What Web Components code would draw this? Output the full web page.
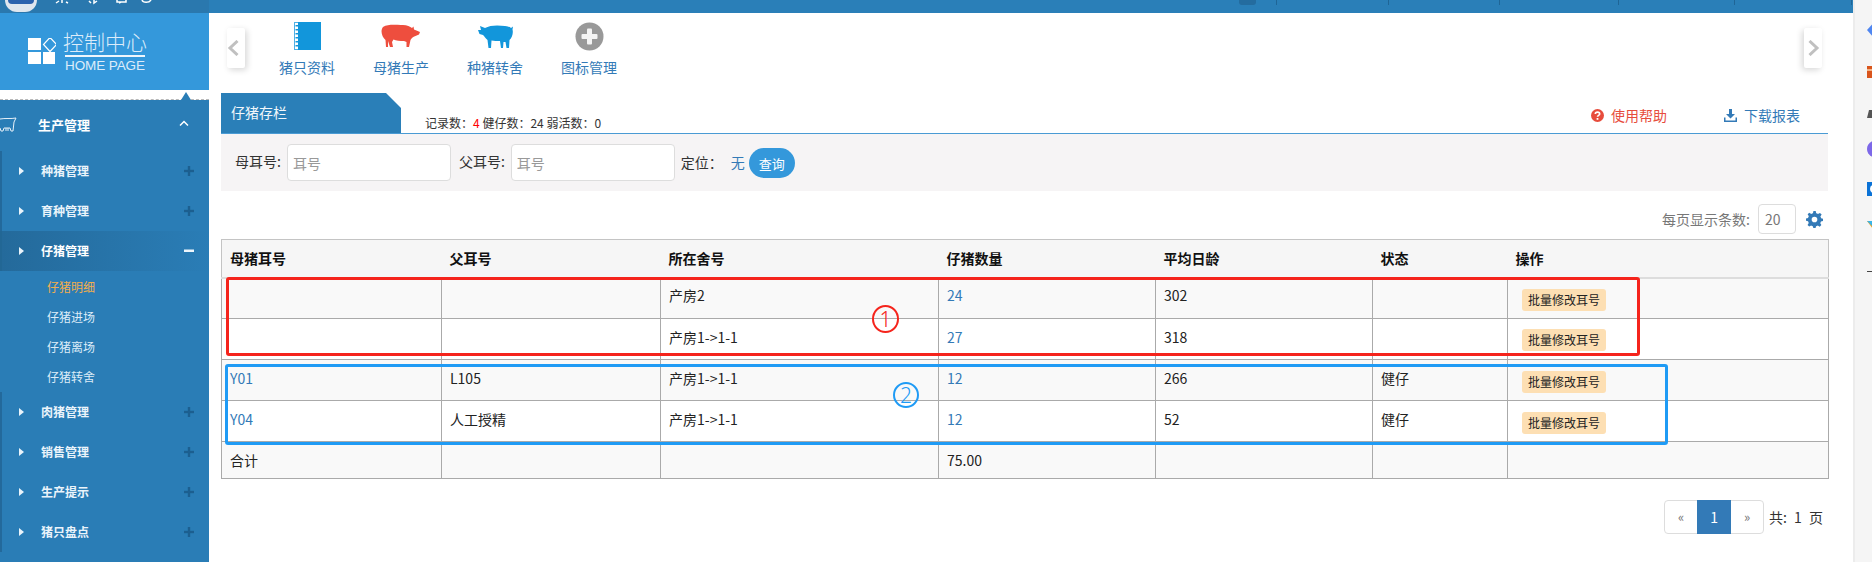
<!DOCTYPE html>
<html lang="zh">
<head>
<meta charset="utf-8">
<title>仔猪存栏</title>
<style>
  html, body { margin: 0; height: 562px; overflow: hidden; background: #fff; }
  body { display: flex; font: 14px/20px "Noto Sans CJK SC", "Liberation Sans", sans-serif; color: #333; }
  .app { flex: 0 0 1853px; min-width: 0; display: flex; flex-direction: column; height: 562px; }
  .body { flex: 1; display: flex; min-height: 0; }
  .left { flex: 0 0 209px; display: flex; flex-direction: column; min-height: 0; }
  .main { flex: 1; display: flex; flex-direction: column; padding: 0 25px 0 12px; min-width: 0; }
</style>
</head>
<body>
  <div class="app">
    <top-bar></top-bar>
    <div class="body">
      <div class="left">
        <logo-panel></logo-panel>
        <side-nav>
          <nav-head>生产管理</nav-head>
          <nav-item>种猪管理</nav-item>
          <nav-item>育种管理</nav-item>
          <nav-item open>仔猪管理</nav-item>
          <nav-sub active first>仔猪明细</nav-sub>
          <nav-sub>仔猪进场</nav-sub>
          <nav-sub>仔猪离场</nav-sub>
          <nav-sub>仔猪转舍</nav-sub>
          <nav-item>肉猪管理</nav-item>
          <nav-item>销售管理</nav-item>
          <nav-item>生产提示</nav-item>
          <nav-item>猪只盘点</nav-item>
        </side-nav>
      </div>
      <div class="main">
        <quick-bar></quick-bar>
        <tab-header></tab-header>
        <filter-bar></filter-bar>
        <page-size></page-size>
        <piglet-table></piglet-table>
        <table-pager></table-pager>
      </div>
    </div>
  </div>
  <side-dock></side-dock>

<script>
const FONT = '"Noto Sans CJK SC", "Liberation Sans", sans-serif';

class TopBar extends HTMLElement {
  constructor() {
    super();
    this.attachShadow({ mode: 'open' });
    const dividers = [21, 112, 111, 119, 116, 117];
    this.shadowRoot.innerHTML = `
      <style>
        :host { display: flex; flex: 0 0 13px; height: 13px; background: #2a7fb8; overflow: hidden; }
        .brand { flex: 0 0 209px; background: #2a78ae; display: flex; align-items: flex-start; padding-left: 5px; box-sizing: border-box; }
        .seal { width: 32px; height: 12px; background: #dfe6ee; border-radius: 0 0 16px 16px; display: flex; justify-content: center; }
        .seal i { width: 26px; height: 4px; background: #2b62ad; border-radius: 0 0 4px 4px; }
        svg { margin-left: 18px; }
        .right { flex: 1; min-width: 0; display: flex; padding-left: 1030px; align-items: flex-start; }
        .chip { flex: none; width: 17px; height: 5px; background: #246c9f; border-radius: 0 0 3px 3px; }
        .cell { flex: none; height: 5px; border-right: 1px solid #1f6596; box-sizing: border-box; }
      </style>
      <div class="brand">
        <div class="seal"><i></i></div>
        <svg width="100" height="13" fill="none" stroke="#fff" stroke-width="1.5">
          <path d="M1 3 L4 1 M7 0 V3 M11 2 L13 3"/>
          <path d="M34 1 L36 3 M39 0 V3 L42 1"/>
          <path d="M62 0 V2 H71 V0 M64 3 L66 2"/>
          <path d="M87 0 C88 3 94 3 96 0"/>
        </svg>
      </div>
      <div class="right">
        <div class="chip"></div>
        ${dividers.map(w => `<div class="cell" style="width:${w}px"></div>`).join('')}
      </div>`;
  }
}
customElements.define('top-bar', TopBar);

class LogoPanel extends HTMLElement {
  constructor() {
    super();
    this.attachShadow({ mode: 'open' });
    this.shadowRoot.innerHTML = `
      <style>
        :host { display: block; flex: 0 0 87px; color: #dcecfa; font-family: ${FONT}; }
        .panel { height: 77px; background: #3498db; display: flex; align-items: flex-start; box-sizing: border-box; padding: 15px 0 0 28px; }
        svg { margin-top: 10px; flex: none; }
        .words { margin-left: 9px; display: flex; flex-direction: column; width: 80px; }
        .cn { font-size: 21px; line-height: 26px; font-weight: 300; white-space: nowrap; margin-left: -2px; }
        .rule { height: 2px; background: #eef6fd; margin-top: 1px; }
        .en { font: 13.5px/16px "Liberation Sans", sans-serif; white-space: nowrap; letter-spacing: -.1px; margin-top: 1px; }
        .gap { height: 10px; border-bottom: 1px dashed #b9b9b9; box-sizing: border-box; display: flex; justify-content: flex-end; align-items: flex-end; padding-right: 18px; }
        .gap i { border: 5px solid transparent; border-bottom: 8px solid #2a7db6; border-top: 0; margin-bottom: -1px; }
      </style>
      <div class="panel">
        <svg width="28" height="27" viewBox="0 0 28 27" fill="#fff">
          <rect x="0" y="0" width="13" height="12"/>
          <rect x="0" y="14" width="13" height="12"/>
          <rect x="15" y="14" width="12" height="12"/>
          <path d="M22 -1 L28.500 6 L22 13 L15.500 6 Z" fill="none" stroke="#fff" stroke-width="1.200" transform="translate(0 0.500)"/>
        </svg>
        <div class="words">
          <div class="cn">控制中心</div>
          <div class="rule"></div>
          <div class="en">HOME PAGE</div>
        </div>
      </div>
      <div class="gap"><i></i></div>`;
  }
}
customElements.define('logo-panel', LogoPanel);

class SideNav extends HTMLElement {
  constructor() {
    super();
    this.attachShadow({ mode: 'open' });
    this.shadowRoot.innerHTML = `
      <style>
        :host { display: flex; flex-direction: column; flex: 1; background: #2a7db6; overflow: hidden; font-family: ${FONT}; }
      </style>
      <slot></slot>`;
  }
}
customElements.define('side-nav', SideNav);

class NavHead extends HTMLElement {
  constructor() {
    super();
    this.attachShadow({ mode: 'open' });
    this.shadowRoot.innerHTML = `
      <style>
        :host { display: flex; align-items: center; flex: 0 0 51px; height: 51px; color: #fff; font-size: 13px; font-weight: 700; box-sizing: border-box; padding-bottom: 1px; }
        svg.pig { flex: none; margin-right: 21px; }
        .label { flex: 1; }
        svg.up { flex: none; margin: -4px 20px 0 0; }
      </style>
      <svg class="pig" width="17" height="16" viewBox="0 0 17 16" fill="none" stroke="#e6f1f9" stroke-width="1">
        <path d="M0 2 C5 1 11 2 16 1 L14 5 L13 14 L11 14 L10 11 H4 L3 14 L1 14 L0 11"/>
        <path d="M6 11 V14 M8 11 V14"/>
      </svg>
      <span class="label"><slot></slot></span>
      <svg class="up" width="10" height="6" viewBox="0 0 10 6" fill="none" stroke="#fff" stroke-width="1.500"><path d="M1 5.500 L5 1.500 L9 5.500"/></svg>`;
  }
}
customElements.define('nav-head', NavHead);

class NavItem extends HTMLElement {
  constructor() {
    super();
    this.attachShadow({ mode: 'open' });
    this.shadowRoot.innerHTML = `
      <style>
        :host { display: flex; align-items: center; flex: 0 0 40px; height: 40px; color: #eaf4fb; font-size: 12px; font-weight: 700; box-sizing: border-box; border-left: 2px solid #23699b; border-bottom: 0 solid transparent; padding-left: 17px; }
        :host([open]) { border-left-color: #226795; background: linear-gradient(90deg, #246a9b, #2a7db6); color: #fff; }
        .tri { flex: none; border-left: 5px solid #eaf4fb; border-top: 4px solid transparent; border-bottom: 4px solid transparent; margin-right: 17px; }
        .label { flex: 1; }
        svg { flex: none; margin-right: 15px; }
      </style>
      <i class="tri"></i>
      <span class="label"><slot></slot></span>
      <svg width="10" height="10" viewBox="0 0 10 10" fill="${this.hasAttribute('open') ? '#eef6fc' : '#1c5f90'}">
        ${this.hasAttribute('open') ? '<rect y="3.500" width="10" height="2.500"/>' : '<rect y="3.800" width="10" height="2.400"/><rect x="3.800" width="2.400" height="10"/>'}
      </svg>`;
  }
}
customElements.define('nav-item', NavItem);

class NavSub extends HTMLElement {
  constructor() {
    super();
    this.attachShadow({ mode: 'open' });
    this.shadowRoot.innerHTML = `
      <style>
        :host { display: flex; align-items: center; flex: 0 0 30px; height: 30px; padding-left: 47px; color: #dcecf8; font-size: 12px; }
        :host([active]) { color: #f0ad4e; }
        :host([first]) { margin-top: 1px; }
      </style>
      <slot></slot>`;
  }
}
customElements.define('nav-sub', NavSub);

class QuickBar extends HTMLElement {
  constructor() {
    super();
    this.attachShadow({ mode: 'open' });
    const links = [
      { label: '猪只资料', icon: `<svg width="27" height="28" viewBox="0 0 27 28"><rect x="0.500" y="0.500" width="26" height="27" fill="#fff" stroke="#4fb0e6"/><rect x="4" y="0" width="23" height="28" fill="#1296db"/>${[4,8,12,16,20,24].map(y => `<rect x="1.500" y="${y-1}" width="2.500" height="1.500" fill="#1296db"/>`).join('')}</svg>` },
      { label: '母猪生产', icon: `<svg width="40" height="24" viewBox="0 0 40 24" fill="#ee4e3e"><path d="M2 3 C7 0 14 1 20 1 C25 0.500 29 2 31 4 L32.500 2.500 L33 5.500 L39 8 L38 10.500 L34.500 12 C32 13 30 14.500 29.500 16 L28 23 L25.500 23 L25.500 18 L23 17 C19 17 15 16.500 12.500 15.500 L11 18 L12 23 L9 23 L7 17 L7 23 L5 23 L4.500 16 C1 13 -1 7 2 3 Z"/></svg>` },
      { label: '种猪转舍', icon: `<svg width="37" height="25" viewBox="0 0 37 25" fill="#1296db"><path d="M1 6 L4 6 L3 2 L8 4 C13 1 21 1 28 2 C31 2.500 33 3 34 4 L36 2.500 L35.500 5.500 C36.500 9 35 14 32.500 16 L32 24 L29.500 24 L28.500 18 L26.500 18 L26 24 L24 24 L23 17 C20 17 17 17 14.500 16.500 L14 24 L11.500 24 L10.500 16 C8 14 7.500 12 6 11 L2.500 10 Z"/></svg>` },
      { label: '图标管理', icon: `<svg width="29" height="29" viewBox="0 0 29 29"><circle cx="14.500" cy="14.500" r="14" fill="#999"/><rect x="12" y="6.500" width="5" height="16" rx="1" fill="#f4f4f4"/><rect x="6.500" y="12" width="16" height="5" rx="1" fill="#f4f4f4"/></svg>` }
    ];
    const chevron = d => `<svg width="12" height="16" viewBox="0 0 12 16" fill="none" stroke="#c0c0c0" stroke-width="3"><path d="${d}"/></svg>`;
    this.shadowRoot.innerHTML = `
      <style>
        :host { display: flex; flex: 0 0 80px; height: 80px; margin: 0 6px; box-sizing: border-box; font-family: ${FONT}; }
        .nav { flex: none; width: 18px; height: 40px; margin-top: 15px; background: #fff; border-radius: 2px; display: flex; align-items: center; }
        .prev { box-shadow: 2px 2px 6px rgba(0,0,0,.16); }
        .next { box-shadow: -2px 2px 6px rgba(0,0,0,.16); justify-content: flex-end; padding-right: 2px; box-sizing: border-box; }
        .links { flex: 1; display: flex; padding: 8px 0 0 15px; }
        a { width: 94px; display: flex; flex-direction: column; align-items: center; color: #337ab7; font-size: 14px; line-height: 20px; text-decoration: none; }
        .icon { height: 30px; display: flex; align-items: center; margin-bottom: 6px; }
      </style>
      <div class="nav prev">${chevron('M10.500 1 L3 8 L10.500 15')}</div>
      <div class="links">
        ${links.map(l => `<a href="#"><span class="icon">${l.icon}</span>${l.label}</a>`).join('')}
      </div>
      <div class="nav next">${chevron('M1.500 1 L9 8 L1.500 15')}</div>`;
  }
}
customElements.define('quick-bar', QuickBar);

class TabHeader extends HTMLElement {
  constructor() {
    super();
    this.attachShadow({ mode: 'open' });
    this.shadowRoot.innerHTML = `
      <style>
        :host { display: flex; flex: 0 0 41px; height: 41px; box-sizing: border-box; border-bottom: 1px solid #4a9bd4; font-family: ${FONT}; }
        .tab { flex: none; width: 180px; background: #2a7fb8; color: #f1f7fb; font-size: 14px; line-height: 39px; box-sizing: border-box; padding-left: 10px; clip-path: polygon(0 0, 165px 0, 180px 15px, 180px 100%, 0 100%); }
        .stats { flex: 1; padding: 20px 0 0 24px; font-size: 12px; line-height: 20px; white-space: nowrap; color: #333; }
        .stats b { color: #f00; font-weight: 400; }
        .act { display: flex; align-items: center; height: 30px; margin-top: 7px; font-size: 14px; white-space: nowrap; }
        .act svg { margin-right: 7px; }
        .help { color: #e74c3c; margin-right: 57px; }
        .down { color: #337ab7; margin-right: 28px; }
      </style>
      <div class="tab">仔猪存栏</div>
      <div class="stats">记录数：<b>4</b> 健仔数：24 弱活数：0</div>
      <div class="act help">
        <svg width="13" height="13" viewBox="0 0 13 13"><circle cx="6.500" cy="6.500" r="6.500" fill="#e74c3c"/><path d="M4.300 5 C4.300 2.500 8.700 2.500 8.700 5 C8.700 6.500 6.500 6.300 6.500 7.800" fill="none" stroke="#fff" stroke-width="1.600"/><rect x="5.600" y="9" width="1.800" height="1.800" fill="#fff"/></svg>
        使用帮助
      </div>
      <div class="act down">
        <svg width="13" height="13" viewBox="0 0 13 13" fill="#337ab7"><path d="M5 0 H8 V5 H11 L6.500 9.500 L2 5 H5 Z"/><path d="M0 8.500 H1.500 V11.500 H11.500 V8.500 H13 V13 H0 Z"/></svg>
        下载报表
      </div>`;
  }
}
customElements.define('tab-header', TabHeader);

class FilterBar extends HTMLElement {
  constructor() {
    super();
    this.attachShadow({ mode: 'open' });
    this.shadowRoot.innerHTML = `
      <style>
        :host { display: flex; align-items: flex-start; flex: 0 0 57px; height: 57px; background: #f6f4f5; box-sizing: border-box; padding: 10px 0 0 14px; font-family: ${FONT}; font-size: 14px; color: #333; }
        label { white-space: nowrap; line-height: 34px; }
        input { width: 164px; height: 37px; box-sizing: border-box; margin: 0 8px 0 6px; border: 1px solid #ddd; border-radius: 4px; padding: 0 5px; font: inherit; background: #fff; outline: none; }
        input::placeholder { color: #999; }
        .loc { line-height: 36px; white-space: nowrap; margin: 0 8px 0 -2px; }
        .none { line-height: 36px; color: #337ab7; margin-right: 4px; }
        button { width: 46px; height: 30px; margin-top: 4px; border: 0; border-radius: 15px; background: #3498db; color: #fff; font: 13px ${FONT}; padding: 0; }
      </style>
      <label>母耳号:</label><input placeholder="耳号">
      <label>父耳号:</label><input placeholder="耳号">
      <span class="loc">定位：</span><span class="none">无</span>
      <button>查询</button>`;
  }
}
customElements.define('filter-bar', FilterBar);

class PageSize extends HTMLElement {
  constructor() {
    super();
    this.attachShadow({ mode: 'open' });
    this.shadowRoot.innerHTML = `
      <style>
        :host { display: flex; align-items: center; justify-content: flex-end; flex: 0 0 48px; height: 48px; box-sizing: border-box; padding: 13px 5px 5px 0; font-family: ${FONT}; font-size: 14px; color: #777; }
        .box { width: 38px; height: 30px; margin: 0 10px 0 8px; box-sizing: border-box; border: 1px solid #ddd; border-radius: 4px; line-height: 28px; padding-left: 6px; color: #777; }
      </style>
      每页显示条数:
      <div class="box">20</div>
      <svg width="17" height="17" viewBox="0 0 24 24" fill="#337ab7"><path fill-rule="evenodd" d="M13.700 0 L14.400 3.200 C15.300 3.500 16.100 3.900 16.900 4.400 L19.700 2.700 L22.100 5.100 L20.300 7.900 C20.800 8.700 21.100 9.500 21.300 10.300 L24 11 V14 L21.100 14.700 C20.900 15.600 20.500 16.400 20 17.100 L21.700 19.900 L19.400 22.200 L16.600 20.500 C15.800 21 15 21.300 14.200 21.500 L13.500 24 H10.300 L9.700 21.400 C8.800 21.200 8 20.800 7.300 20.300 L4.500 22 L2.200 19.700 L3.900 16.900 C3.400 16.100 3.100 15.300 2.900 14.500 L0 13.800 V10.600 L2.900 9.900 C3.100 9 3.500 8.200 4 7.500 L2.300 4.700 L4.600 2.400 L7.400 4.100 C8.200 3.600 9 3.300 9.800 3.100 L10.500 0 Z M12 8 A4 4 0 1 0 12 16 A4 4 0 1 0 12 8 Z"/></svg>`;
  }
}
customElements.define('page-size', PageSize);

class PigletTable extends HTMLElement {
  constructor() {
    super();
    this.attachShadow({ mode: 'open' });
  }

  connectedCallback() {
    this.render();
  }

  getRows() {
    return [
      { mother: '', father: '', house: '产房2', count: '24', age: '302', state: '' },
      { mother: '', father: '', house: '产房1->1-1', count: '27', age: '318', state: '' },
      { mother: 'Y01', father: 'L105', house: '产房1->1-1', count: '12', age: '266', state: '健仔' },
      { mother: 'Y04', father: '人工授精', house: '产房1->1-1', count: '12', age: '52', state: '健仔' }
    ];
  }

  render() {
    const heads = ['母猪耳号', '父耳号', '所在舍号', '仔猪数量', '平均日龄', '状态', '操作'];
    const widths = [220, 219, 278, 217, 217, 135, 321];
    this.shadowRoot.innerHTML = `
      <style>
        :host { display: block; position: relative; flex: none; font-family: ${FONT}; font-size: 14px; color: #222; }
        table { border-collapse: collapse; table-layout: fixed; width: 1607px; }
        th { height: 38px; box-sizing: border-box; background: #f6f6f6; text-align: left; padding: 0 8px; font-weight: 700; color: #111; border-top: 1px solid #c4c4c4; border-bottom: 2px solid #ddd; }
        th:first-child { border-left: 1px solid #c4c4c4; }
        th:last-child { border-right: 1px solid #c4c4c4; }
        td { height: 41px; box-sizing: border-box; padding: 8px 8px 0; vertical-align: top; line-height: 20px; border: 1px solid #aaa; white-space: nowrap; }
        tr:nth-child(odd) td { background: #f9f9f9; }
        tbody tr:first-child td { padding-top: 6px; }
        tr.sum td { height: 37px; padding-top: 8px; }
        a { color: #337ab7; text-decoration: none; }
        .op { display: inline-block; width: 84px; height: 22px; margin: 2px 0 0 6px; line-height: 22px; text-align: center; background: #fddfb3; border-radius: 3px; font-size: 12px; color: #222; vertical-align: top; }
        tbody tr:first-child .op { margin-top: 4px; }
        tbody tr:nth-child(n+3) .op { margin-top: 3px; }
        .note { position: absolute; box-sizing: border-box; border: 3px solid; border-radius: 3px; }
        .red { color: #f5241c; }
        .blue { color: #1f9bf5; }
        .num { position: absolute; box-sizing: border-box; border: 2.500px solid; border-radius: 50%; display: flex; align-items: center; justify-content: center; font: 300 21px/1 "Noto Sans", sans-serif; }
      </style>
      <table>
        <colgroup>${widths.map(w => `<col style="width:${w}px">`).join('')}</colgroup>
        <thead><tr>${heads.map(h => `<th>${h}</th>`).join('')}</tr></thead>
        <tbody>
          ${this.getRows().map(r => `
            <tr>
              <td>${r.mother ? `<a href="#">${r.mother}</a>` : ''}</td>
              <td>${r.father}</td>
              <td>${r.house}</td>
              <td><a href="#">${r.count}</a></td>
              <td>${r.age}</td>
              <td>${r.state}</td>
              <td><span class="op">批量修改耳号</span></td>
            </tr>`).join('')}
          <tr class="sum"><td>合计</td><td></td><td></td><td>75.00</td><td></td><td></td><td></td></tr>
        </tbody>
      </table>
      <div class="note red" style="left:5px;top:38px;width:1414px;height:79px"></div>
      <div class="note blue" style="left:4px;top:125px;width:1443px;height:81px"></div>
      <div class="num red" style="left:651px;top:66px;width:27px;height:28px">1</div>
      <div class="num blue" style="left:672px;top:143px;width:26px;height:26px">2</div>`;
  }
}
customElements.define('piglet-table', PigletTable);

class TablePager extends HTMLElement {
  constructor() {
    super();
    this.attachShadow({ mode: 'open' });
    this.shadowRoot.innerHTML = `
      <style>
        :host { display: flex; align-items: center; justify-content: flex-end; flex: none; margin-top: 21px; padding-right: 5px; font-family: ${FONT}; font-size: 14px; color: #333; word-spacing: 4px; }
        .pages { display: flex; height: 34px; margin-right: 5px; box-sizing: border-box; border: 1px solid #ddd; border-radius: 4px; }
        .pages span { width: 32px; text-align: center; line-height: 32px; color: #777; font-size: 13px; }
        .pages .on { width: 34px; height: 34px; margin-top: -1px; background: #337ab7; color: #fff; line-height: 34px; font-size: 14px; }
      </style>
      <div class="pages"><span>«</span><span class="on">1</span><span>»</span></div>
      共: 1 页`;
  }
}
customElements.define('table-pager', TablePager);

class SideDock extends HTMLElement {
  constructor() {
    super();
    this.attachShadow({ mode: 'open' });
    this.shadowRoot.innerHTML = `
      <style>
        :host { display: flex; flex-direction: column; flex: 1; min-width: 0; height: 562px; box-sizing: border-box; background: #f5f5f5; border-left: 2px solid #ececec; padding: 21px 0 0 12px; overflow: hidden; }
        svg { display: block; flex: none; margin-bottom: 21px; }
      </style>
      <svg width="16" height="18" viewBox="0 0 16 18"><path d="M0 9 L8 0 H16 V18 H8 Z" fill="#4f86f0"/></svg>
      <svg width="16" height="18" viewBox="0 0 16 18"><path d="M6 0 H8 V4 H16 V18 H0 V6 H6 Z" fill="#d9551c"/><rect x="0" y="9" width="16" height="2" fill="#f4b183"/></svg>
      <svg width="16" height="19" viewBox="0 0 16 19"><path d="M5 0 H16 V19 H0 L2 11 H5 Z" fill="#555"/></svg>
      <svg width="16" height="20" viewBox="0 0 16 20"><path d="M16 0 V20 C6 20 0 16 0 10 C0 4 6 0 16 0 Z" fill="#7d68e8"/></svg>
      <svg width="16" height="18" viewBox="0 0 16 18"><rect y="2" width="16" height="14" fill="#0a72d6"/><circle cx="7" cy="9" r="3" fill="none" stroke="#fff" stroke-width="2"/></svg>
      <svg width="16" height="14" viewBox="0 0 16 14" style="margin-top:2px"><path d="M0 0 H16 V14 H9 L6 8 Z" fill="#f5a623"/><path d="M0 0 H8 L5 5 Z" fill="#3ab4e8"/></svg>
      <svg width="16" height="2" viewBox="0 0 16 2" style="margin-top:15px"><rect y="0" width="16" height="1" fill="#444"/></svg>`;
  }
}
customElements.define('side-dock', SideDock);
</script>
</body>
</html>
